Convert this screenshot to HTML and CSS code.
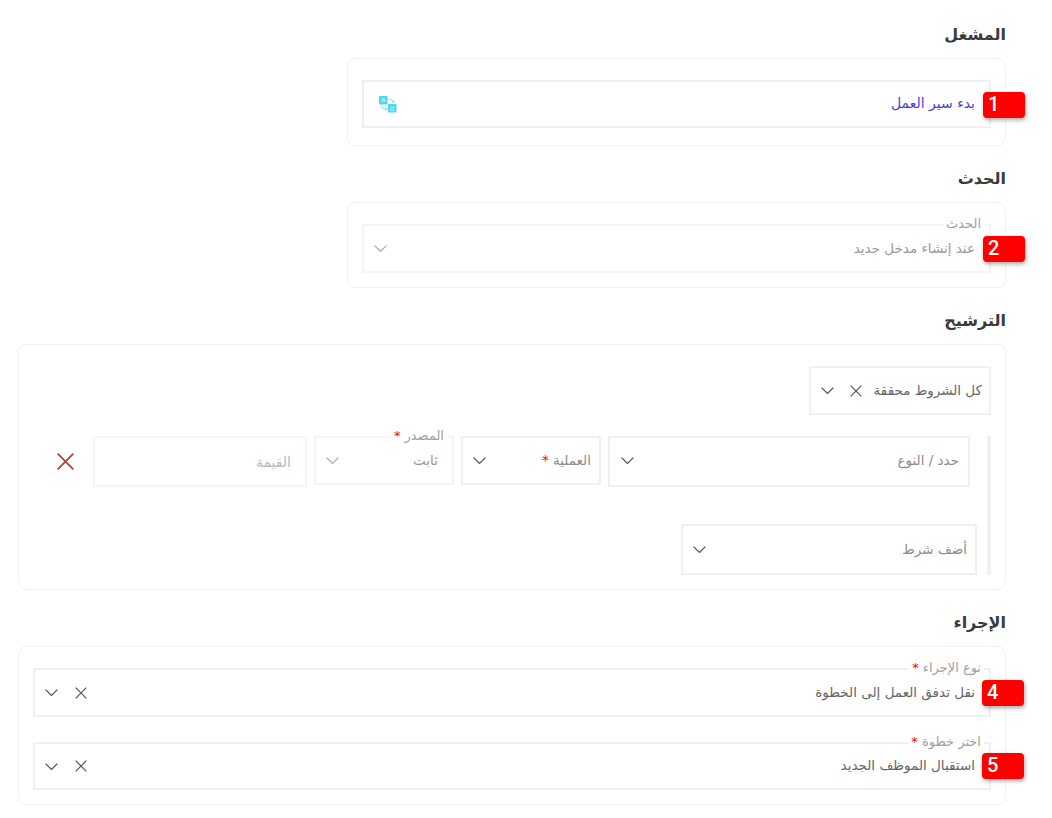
FILE: index.html
```html
<!DOCTYPE html>
<html lang="ar" dir="rtl">
<head>
<meta charset="utf-8">
<title>سير العمل</title>
<link rel="stylesheet" href="styles.css">
</head>
<body>
<svg class="defs" width="0" height="0" aria-hidden="true">
  <symbol id="chev" viewBox="0 0 13 7"><path d="M.6.6l5.900 5.800L12.400.6" fill="none" stroke="currentColor" stroke-width="1.300"/></symbol>
  <symbol id="cross" viewBox="0 0 12 12"><path d="M.7.7l10.600 10.600M11.300.7L.7 11.300" fill="none" stroke="currentColor" stroke-width="1.200"/></symbol>
</svg>
<main class="page">
  <section class="section">
    <h2 class="title">المشغل</h2>
    <div class="card card-narrow card-trigger">
      <div class="field field-48">
        <span class="value value-link">بدء سير العمل</span>
        <svg class="translate" width="18" height="18" viewBox="0 0 18 18" aria-hidden="true">
          <rect x="0" y="1" width="8.500" height="8.500" fill="#4fd8f2"/>
          <rect x="9" y="9" width="8.500" height="8.500" fill="#4fd8f2"/>
          <text x="4.200" y="7.300" font-size="6" text-anchor="middle" fill="#fff" font-family="Liberation Sans">A</text>
          <path d="M9.500 4.500h3l2 2.500M13 5.800l1.500 1.600 1.400-1.400M3 10.500v2l2 1.500h2.500M6 12.800L7.800 14 6 15.200" fill="none" stroke="#8fe7f7" stroke-width="1.100"/>
          <rect x="11" y="12" width="4.500" height="1" fill="#c8f4fb"/>
          <rect x="11" y="14.500" width="4.500" height="1" fill="#c8f4fb"/>
        </svg>
        <span class="badge">1</span>
      </div>
    </div>
  </section>

  <section class="section">
    <h2 class="title">الحدث</h2>
    <div class="card card-narrow card-event">
      <div class="field field-49 field-muted">
        <span class="legend">الحدث</span>
        <span class="value value-muted">عند إنشاء مدخل جديد</span>
        <svg class="chev chev-muted"><use href="#chev"/></svg>
        <span class="badge">2</span>
      </div>
    </div>
  </section>

  <section class="section">
    <h2 class="title">الترشيح</h2>
    <div class="card card-filter">
      <div class="field field-49 field-all">
        <span class="value value-text">كل الشروط محققة</span>
        <svg class="cross"><use href="#cross"/></svg>
        <svg class="chev"><use href="#chev"/></svg>
      </div>
      <div class="conditions">
        <div class="rule">
          <div class="field field-51 field-type">
            <span class="value value-label">حدد / النوع</span>
            <svg class="chev"><use href="#chev"/></svg>
          </div>
          <div class="field field-49 field-small">
            <span class="value value-label">العملية <em class="req">*</em></span>
            <svg class="chev"><use href="#chev"/></svg>
          </div>
          <div class="field field-49 field-small field-source field-muted">
            <span class="legend">المصدر <em class="req">*</em></span>
            <span class="value value-muted">ثابت</span>
            <svg class="chev chev-muted"><use href="#chev"/></svg>
          </div>
          <div class="field field-51 field-input">
            <span class="value value-placeholder">القيمة</span>
          </div>
          <svg class="remove" viewBox="0 0 17 17" aria-hidden="true"><path d="M.7.7l15.600 15.600M16.300.7L.7 16.300" fill="none" stroke="#b5413a" stroke-width="1.800"/></svg>
        </div>
        <div class="field field-51 field-add">
          <span class="value value-label">أضف شرط</span>
          <svg class="chev"><use href="#chev"/></svg>
        </div>
      </div>
    </div>
  </section>

  <section class="section">
    <h2 class="title">الإجراء</h2>
    <div class="card card-action">
      <div class="field field-49">
        <span class="legend">نوع الإجراء <em class="req">*</em></span>
        <span class="value value-text">نقل تدفق العمل إلى الخطوة</span>
        <svg class="cross"><use href="#cross"/></svg>
        <svg class="chev"><use href="#chev"/></svg>
        <span class="badge badge-four">4</span>
      </div>
      <div class="field field-48">
        <span class="legend">اختر خطوة <em class="req">*</em></span>
        <span class="value value-text">استقبال الموظف الجديد</span>
        <svg class="cross"><use href="#cross"/></svg>
        <svg class="chev"><use href="#chev"/></svg>
        <span class="badge badge-five">5</span>
      </div>
    </div>
  </section>
</main>
</body>
</html>
```
FILE: styles.css
```css
* { box-sizing: border-box; }
html, body { margin: 0; background: #fff; }
body { font-family: "DejaVu Sans", "Noto Sans", sans-serif; font-size: 13.500px; color: #666; }
.defs { position: absolute; }
.page { padding: 2px 46px 0 18px; }
.title { margin: 20px 0 12px; height: 24px; line-height: 26px; font-size: 16px; font-weight: 700; color: #3a3a3a; }
.card { border: 1px solid #f2f2f2; border-radius: 8px; background: #fff; }
.card-narrow { margin-left: 329px; padding: 21px 14px 17px; }
.card-event { padding-bottom: 14px; }
.card-filter { padding: 21px 14px 14px; height: 246px; }
.card-action { padding: 21px 14px 14px; display: flex; flex-direction: column; gap: 25px; height: 159px; }
.field { position: relative; display: flex; align-items: center; border: 2px solid #f0f0f0; padding: 0 14px 0 10px; background: #fff; }
.field-48 { height: 48px; }
.field-49 { height: 49px; }
.field-51 { height: 51px; }
.field-muted { border-color: #f5f5f5; }
.value { flex: 1; line-height: 16px; padding-bottom: 2px; white-space: nowrap; }
.value-link { color: #4a3fd6; font-size: 14px; padding-bottom: 2px; }
.value-muted { color: #9a9a9a; }
.value-text { color: #666; }
.value-label { color: #8c8c8c; }
.value-placeholder { color: #b8b8b8; font-size: 14px; padding-bottom: 0; }
.legend { position: absolute; top: -10px; right: 5px; padding: 0 3px; line-height: 16px; font-size: 13px; background: #fff; color: #a0a0a0; white-space: nowrap; }
.req { color: #f00; font-style: normal; }
.chev { width: 13px; height: 7px; flex: none; color: #555; }
.chev-muted { color: #aaa; }
.cross { width: 12px; height: 12px; flex: none; margin-left: 17px; color: #555; }
.translate { flex: none; margin-left: 5px; }
.badge { position: absolute; top: 10px; right: -36px; width: 42px; height: 26px; padding-left: 5px; border-radius: 4px; background: #f00; box-shadow: 1px 2px 4px rgba(0,0,0,.35); color: #fff; font: 500 20px/25px Roboto, sans-serif; direction: ltr; text-align: left; }
.badge-four { right: -35px; }
.badge-five { top: 9px; right: -35px; }
.field-all { width: 182px; padding: 0 7px 0 10px; }
.field-all .cross { margin-left: 16px; margin-right: 8px; }
.conditions { margin-top: 21px; height: 139px; border-right: 4px solid #f0f0f0; padding-right: 10px; }
.rule { display: flex; align-items: flex-start; gap: 7px; margin-right: 7px; }
.field-type { width: 362px; padding: 0 9px 2px 11px; }
.field-small { width: 140px; padding: 0 8px 0 10px; }
.field-source { padding-right: 14px; }
.field-input { width: 214px; border-color: #f5f5f5; border-radius: 2px; }
.remove { width: 17px; height: 17px; flex: none; margin: 17px 12px 0 0; }
.field-add { width: 296px; padding: 0 8px 0 10px; margin-top: 37px; }
```
